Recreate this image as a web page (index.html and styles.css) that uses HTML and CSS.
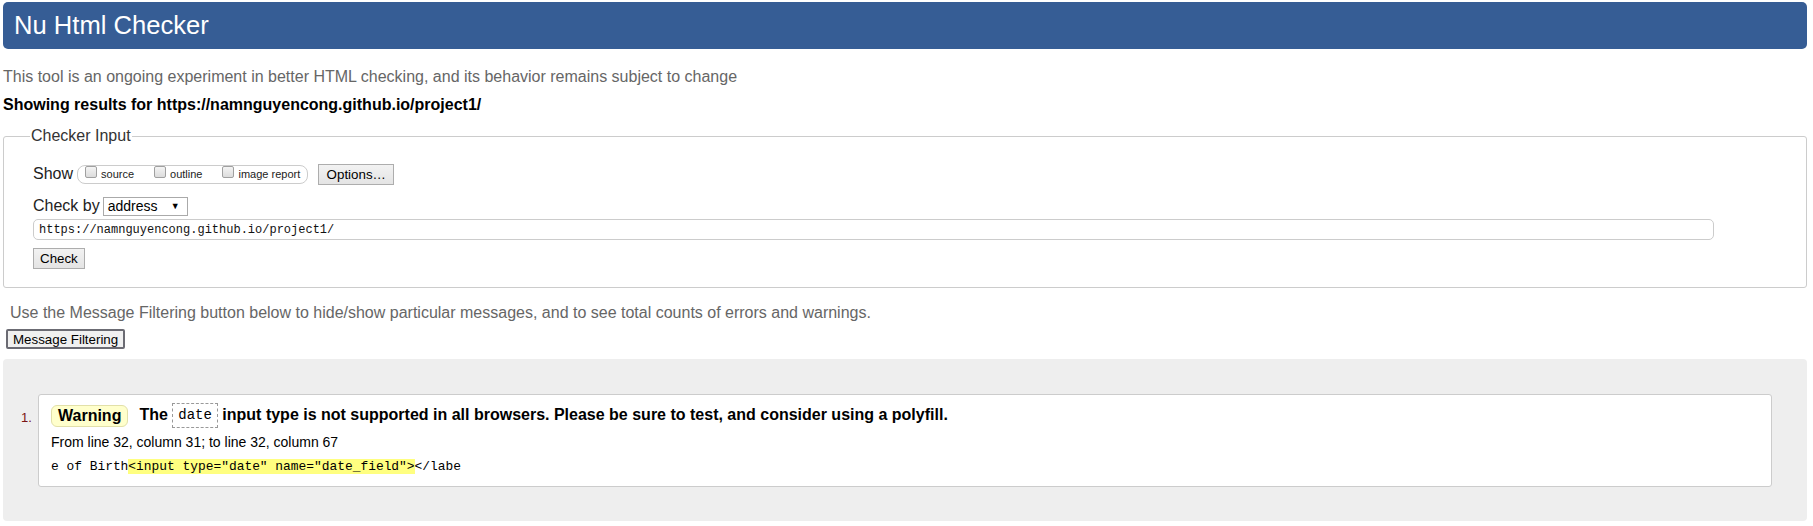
FILE: index.html
```html
<!DOCTYPE html>
<html lang="en">
<head>
<meta charset="utf-8">
<title>Nu Html Checker</title>
<link rel="stylesheet" href="styles.css">
</head>
<body>
<h1 class="header">Nu Html Checker</h1>
<p class="intro">This tool is an ongoing experiment in better HTML checking, and its behavior remains subject to change</p>
<p class="showing">Showing results for https://namnguyencong.github.io/project1/</p>
<fieldset class="checker">
  <legend class="legend">Checker Input</legend>
  <div class="row row-show">
    <span class="label">Show</span>
    <span class="opts">
      <label class="opt"><input type="checkbox" class="cb"><span>source</span></label>
      <label class="opt"><input type="checkbox" class="cb"><span>outline</span></label>
      <label class="opt"><input type="checkbox" class="cb"><span>image report</span></label>
    </span>
    <button class="btn btn-options">Options…</button>
  </div>
  <div class="row row-by">
    <span class="label">Check by</span>
    <span class="select">address<span class="arrow">▼</span></span>
  </div>
  <div class="url">https://namnguyencong.github.io/project1/</div>
  <div class="row row-check">
    <button class="btn">Check</button>
  </div>
</fieldset>
<p class="filter-note">Use the Message Filtering button below to hide/show particular messages, and to see total counts of errors and warnings.</p>
<button class="btn btn-filter">Message Filtering</button>
<div class="results">
  <ol class="messages">
    <li class="msg">
      <span class="num">1.</span>
      <div class="box">
        <p class="msg-line"><span class="badge">Warning</span><span class="msg-text">The <code class="code">date</code> input type is not supported in all browsers. Please be sure to test, and consider using a polyfill.</span></p>
        <p class="loc">From line 32, column 31; to line 32, column 67</p>
        <p class="extract">e of Birth<mark class="hl">&lt;input type="date" name="date_field"&gt;</mark>&lt;/labe</p>
      </div>
    </li>
  </ol>
</div>
</body>
</html>
```
FILE: styles.css
```css
html, body {
  margin: 0;
  padding: 0;
  background: #fff;
}
body {
  padding: 2px 6px 0 3px;
  font-family: "Liberation Sans", Arial, sans-serif;
  font-size: 16px;
  color: #000;
}
.header {
  margin: 0;
  height: 47px;
  padding: 0 11px;
  display: flex;
  align-items: center;
  background: #365d95;
  color: #fff;
  font-size: 25.6px;
  font-weight: normal;
  border-radius: 5px;
}
.intro {
  margin: 19px 0 0 0;
  line-height: 18px;
  color: #666;
}
.showing {
  margin: 10px 0 0 0;
  line-height: 18px;
  font-weight: bold;
}
.checker {
  margin: 13px 0 0 0;
  padding: 18px 29px 18px 29px;
  border: 1px solid #ccc;
  border-radius: 3px;
  min-inline-size: 0;
}
.legend {
  padding: 0 1px;
  margin-left: -3px;
  line-height: 18px;
  color: #333;
}
.row {
  display: flex;
  align-items: center;
}
.label {
  font-size: 16px;
  line-height: 18px;
  color: #222;
}
.row-show {
  height: 22px;
}
.opts {
  display: flex;
  align-items: center;
  height: 17px;
  margin-left: 4px;
  padding: 0 7px 0 7px;
  border: 1px solid #ccc;
  border-radius: 8px;
  font-size: 11px;
  gap: 20px;
}
.opt {
  display: flex;
  align-items: center;
  gap: 4px;
  color: #222;
}
.cb {
  appearance: none;
  -webkit-appearance: none;
  margin: 0;
  width: 12px;
  height: 12px;
  border: 1px solid #a0a0a0;
  border-radius: 2px;
  background: linear-gradient(#f4f4f4, #dcdcdc);
  position: relative;
  top: -2px;
}
.btn {
  font-family: "Liberation Sans", Arial, sans-serif;
  font-size: 13.33px;
  height: 21px;
  padding: 0 6px;
  border: 1px solid #adadad;
  border-radius: 0;
  background: linear-gradient(#f2f2f2, #e4e4e4);
  color: #000;
}
.btn-options {
  margin-left: 10px;
  width: 76px;
}
.row-by {
  margin-top: 10px;
  height: 22px;
}
.select {
  display: inline-flex;
  align-items: center;
  justify-content: space-between;
  margin-left: 3px;
  width: 85px;
  height: 19px;
  box-sizing: border-box;
  padding: 0 7px 0 4px;
  border: 1px solid #aaa;
  font-size: 14px;
  background: #fff;
}
.arrow {
  font-size: 9px;
}
.url {
  margin-top: 2px;
  width: calc(100% - 63px);
  height: 21px;
  box-sizing: border-box;
  padding: 0 5px;
  display: flex;
  align-items: center;
  border: 1px solid #ccc;
  border-radius: 5px;
  font-family: "Liberation Mono", "DejaVu Sans Mono", monospace;
  font-size: 12px;
  color: #111;
}
.row-check {
  margin-top: 8px;
}
.filter-note {
  margin: 16px 0 0 0;
  padding-left: 7px;
  line-height: 18px;
  color: #666;
}
.btn-filter {
  margin: 7px 0 0 3px;
  height: 20px;
  display: block;
  border: 2px solid #6b6b73;
  border-radius: 2px;
  padding: 0 5px;
  background: #f0f0f0;
}
.results {
  margin-top: 10px;
  background: #eee;
  border-radius: 4px;
  padding: 35px 35px 34px 18px;
}
.messages {
  margin: 0;
  padding: 0;
  list-style: none;
}
.msg {
  display: flex;
  align-items: flex-start;
}
.num {
  width: 17px;
  margin-top: 16px;
  font-size: 13px;
  color: #7a1414;
}
.box {
  flex: 1;
  background: #fff;
  border: 1px solid #ccc;
  border-radius: 3px;
  padding: 8px 12px 9px 12px;
}
.msg-line {
  margin: 0;
  display: flex;
  align-items: center;
  font-weight: bold;
  font-size: 16px;
  height: 25px;
}
.badge {
  display: inline-flex;
  align-items: center;
  height: 20px;
  padding: 0 6px;
  margin-right: 11px;
  background: #ffc;
  border: 1px solid #e2e0a8;
  border-radius: 6px;
}
.code {
  display: inline-block;
  font-family: "Liberation Mono", "DejaVu Sans Mono", monospace;
  font-weight: normal;
  font-size: 14px;
  line-height: 21px;
  padding: 1px 5px;
  border: 1px dashed #999;
  vertical-align: middle;
}
.loc {
  margin: 6px 0 0 0;
  font-size: 14px;
  line-height: 17px;
}
.extract {
  margin: 6px 0 0 0;
  font-family: "Liberation Mono", "DejaVu Sans Mono", monospace;
  font-size: 12.9px;
  line-height: 20px;
}
.hl {
  background: #ffff80;
  color: #000;
}
```
